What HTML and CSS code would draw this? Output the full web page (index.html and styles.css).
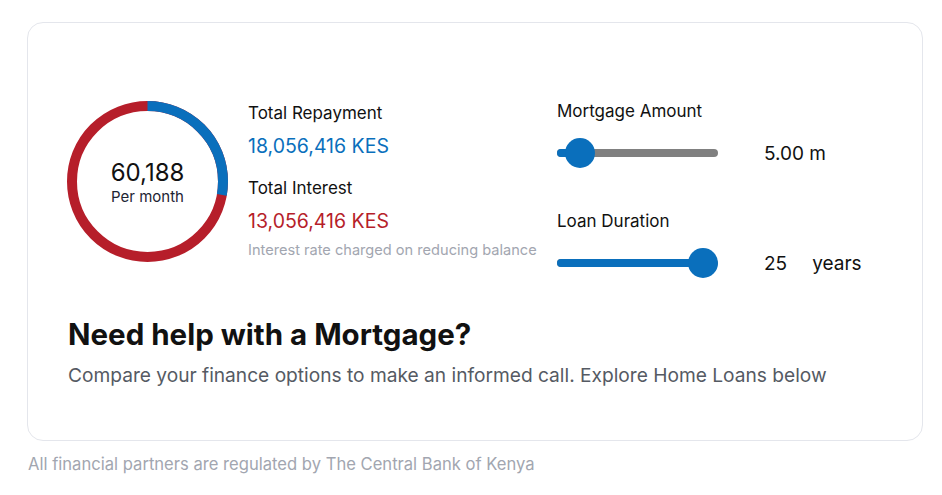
FILE: index.html
```html
<!DOCTYPE html>
<html lang="en">
<head>
    <meta charset="UTF-8">
    <meta name="viewport" content="width=device-width, initial-scale=1.0">
    <title>Mortgage Calculator</title>
    <link rel="stylesheet" href="styles.css">
</head>
<body>
    <section class="card">
        <div class="calculator">
            <!-- Monthly payment donut -->
            <div class="donut">
                <svg width="161" height="161" viewBox="0 0 161 161">
                    <circle cx="80.5" cy="80.5" r="75.5" fill="none" stroke="#b61e2a" stroke-width="10"></circle>
                    <circle cx="80.5" cy="80.5" r="75.5" fill="none" stroke="#0a6fbc" stroke-width="10"
                        stroke-dasharray="131.8 474.4" transform="rotate(-90 80.5 80.5)"></circle>
                </svg>
                <div class="donut-label">
                    <span class="monthly">60,188</span>
                    <span class="per">Per month</span>
                </div>
            </div>

            <!-- Totals -->
            <div class="summary">
                <p class="summary-title">Total Repayment</p>
                <p class="summary-value blue">18,056,416 KES</p>
                <p class="summary-title">Total Interest</p>
                <p class="summary-value red">13,056,416 KES</p>
                <p class="note">Interest rate charged on reducing balance</p>
            </div>

            <!-- Inputs -->
            <div class="inputs">
                <div class="field">
                    <p class="field-label">Mortgage Amount</p>
                    <div class="field-row">
                        <div class="slider">
                            <div class="track"><div class="fill" style="width: 22.5px"></div></div>
                            <span class="thumb" style="left: 7.5px"></span>
                        </div>
                        <span class="value">5.00 m</span>
                    </div>
                </div>
                <div class="field">
                    <p class="field-label">Loan Duration</p>
                    <div class="field-row">
                        <div class="slider">
                            <div class="track"><div class="fill" style="width: 146px"></div></div>
                            <span class="thumb" style="left: 131px"></span>
                        </div>
                        <span class="value">25</span>
                        <span class="unit">years</span>
                    </div>
                </div>
            </div>
        </div>

        <h2>Need help with a Mortgage?</h2>
        <p class="lead">Compare your finance options to make an informed call. Explore Home Loans below</p>
    </section>

    <p class="footnote">All financial partners are regulated by The Central Bank of Kenya</p>
</body>
</html>
```

FILE: styles.css
```css
/* Reset */
* {
    box-sizing: border-box;
    margin: 0;
    padding: 0;
}

body {
    font-family: Inter, "Noto Sans", sans-serif;
    color: #111;
    background: #fff;
    padding: 22px 19px 0 27px;
}

/* Card */
.card {
    border: 1px solid #e4e6ec;
    border-radius: 16px;
    padding: 78px 40px 52px 39px;
}

.calculator {
    display: flex;
    align-items: flex-start;
}

/* Donut */
.donut {
    position: relative;
    width: 161px;
    height: 161px;
    flex-shrink: 0;
}

.donut svg {
    display: block;
}

.donut-label {
    position: absolute;
    inset: 0;
    display: flex;
    flex-direction: column;
    align-items: center;
    justify-content: center;
    padding-top: 2px;
}

.monthly {
    font-size: 24px;
    line-height: 28px;
}

.per {
    font-size: 15px;
    line-height: 20px;
    color: #1d2433;
}

/* Totals */
.summary {
    margin-left: 20px;
    width: 289px;
}

.summary-title {
    font-size: 17px;
    line-height: 24px;
}

.summary-value {
    font-size: 19.5px;
    line-height: 26px;
    margin: 8px 0 17px;
}

.summary-value.blue { color: #0a6fbc; }
.summary-value.red { color: #b61e2a; margin-bottom: 6px; }

.note {
    font-size: 14.6px;
    line-height: 20px;
    color: #a2a6b0;
}

/* Inputs */
.inputs {
    margin-left: 20px;
    margin-top: -2px;
}

.field + .field {
    margin-top: 34px;
}

.field-label {
    font-size: 17px;
    line-height: 24px;
}

.field-row {
    display: flex;
    align-items: center;
    height: 44px;
    margin-top: 8px;
}

.slider {
    position: relative;
    width: 161px;
    height: 30px;
    display: flex;
    align-items: center;
}

.track {
    width: 100%;
    height: 8px;
    border-radius: 4px;
    background: #808080;
    overflow: hidden;
}

.fill {
    height: 100%;
    background: #0a6fbc;
}

.thumb {
    position: absolute;
    top: 0;
    width: 30px;
    height: 30px;
    border-radius: 50%;
    background: #0a6fbc;
}

.value {
    margin-left: 46px;
    font-size: 19px;
}

.unit {
    margin-left: 25px;
    font-size: 19px;
}

/* Call to action */
h2 {
    margin-top: 31px;
    padding-left: 1px;
    font-size: 29.5px;
    line-height: 36px;
    font-weight: 700;
}

.lead {
    margin-top: 10px;
    padding-left: 1px;
    font-size: 19.15px;
    line-height: 26px;
    color: #555a63;
}

.footnote {
    margin-top: 12px;
    padding-left: 1px;
    font-size: 16.6px;
    line-height: 22px;
    color: #a2a6b0;
}
```
